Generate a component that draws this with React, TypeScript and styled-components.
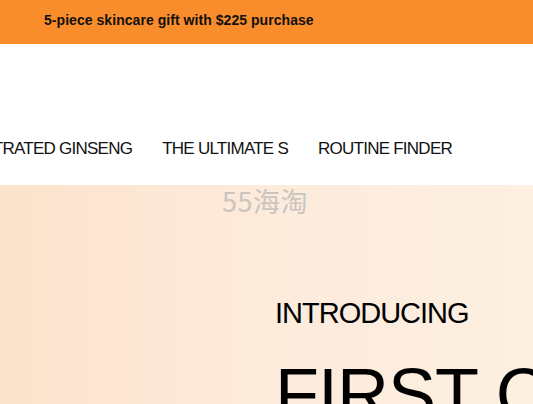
import React from "react";
import styled, { createGlobalStyle } from "styled-components";

const Global = createGlobalStyle`
  html, body { margin: 0; padding: 0; background: #fff; }
  body { font-family: "Liberation Sans", Arial, sans-serif; overflow: hidden; }
`;

const Page = styled.div`
  width: 533px;
  height: 404px;
  overflow: hidden;
  display: flex;
  flex-direction: column;
`;

const Promo = styled.div`
  height: 44px;
  flex: none;
  background: #f98d2b;
  display: flex;
  align-items: center;
  padding: 0 0 4px 44px;
  box-sizing: border-box;
  font-size: 14px;
  font-weight: 700;
  letter-spacing: 0.05px;
  color: #111;
`;

const Header = styled.header`
  height: 141px;
  flex: none;
  background: #fff;
  display: flex;
  align-items: flex-end;
  padding-bottom: 26px;
  box-sizing: border-box;
  overflow: hidden;
`;

const NavStrip = styled.nav`
  flex: 1;
  display: flex;
  justify-content: flex-end;
  gap: 30px;
  padding-right: 81px;
  white-space: nowrap;
  overflow: hidden;
`;

const NavItem = styled.span`
  font-size: 17px;
  letter-spacing: -0.75px;
  color: #111;
  flex: none;
`;

const Hero = styled.section`
  flex: 1;
  position: relative;
  background: linear-gradient(90deg, #fce2cb 0%, #fdeadb 45%, #fdf0e1 100%);
  display: flex;
  flex-direction: column;
  padding-left: 275px;
  padding-top: 114px;
  box-sizing: border-box;
  overflow: hidden;
`;

const Watermark = styled.div`
  position: absolute;
  left: 222px;
  top: 2px;
  line-height: 1;
  font-family: "Noto Sans CJK SC", "Liberation Sans", sans-serif;
  font-size: 27px;
  color: #cbc5bf;
  letter-spacing: 0.5px;
`;

const Intro = styled.div`
  font-size: 29px;
  letter-spacing: -1px;
  color: #000;
  line-height: 1;
`;

const Big = styled.div`
  margin-top: 30px;
  font-size: 72px;
  letter-spacing: -1px;
  color: #000;
  line-height: 1;
  white-space: nowrap;
`;

export default function App() {
  return (
    <Page>
      <Global />
      <Promo>5-piece skincare gift with $225 purchase</Promo>
      <Header>
        <NavStrip>
          <NavItem>CONCENTRATED GINSENG</NavItem>
          <NavItem>THE ULTIMATE S</NavItem>
          <NavItem>ROUTINE FINDER</NavItem>
        </NavStrip>
      </Header>
      <Hero>
        <Watermark>55海淘</Watermark>
        <Intro>INTRODUCING</Intro>
        <Big>FIRST CREAM</Big>
      </Hero>
    </Page>
  );
}
